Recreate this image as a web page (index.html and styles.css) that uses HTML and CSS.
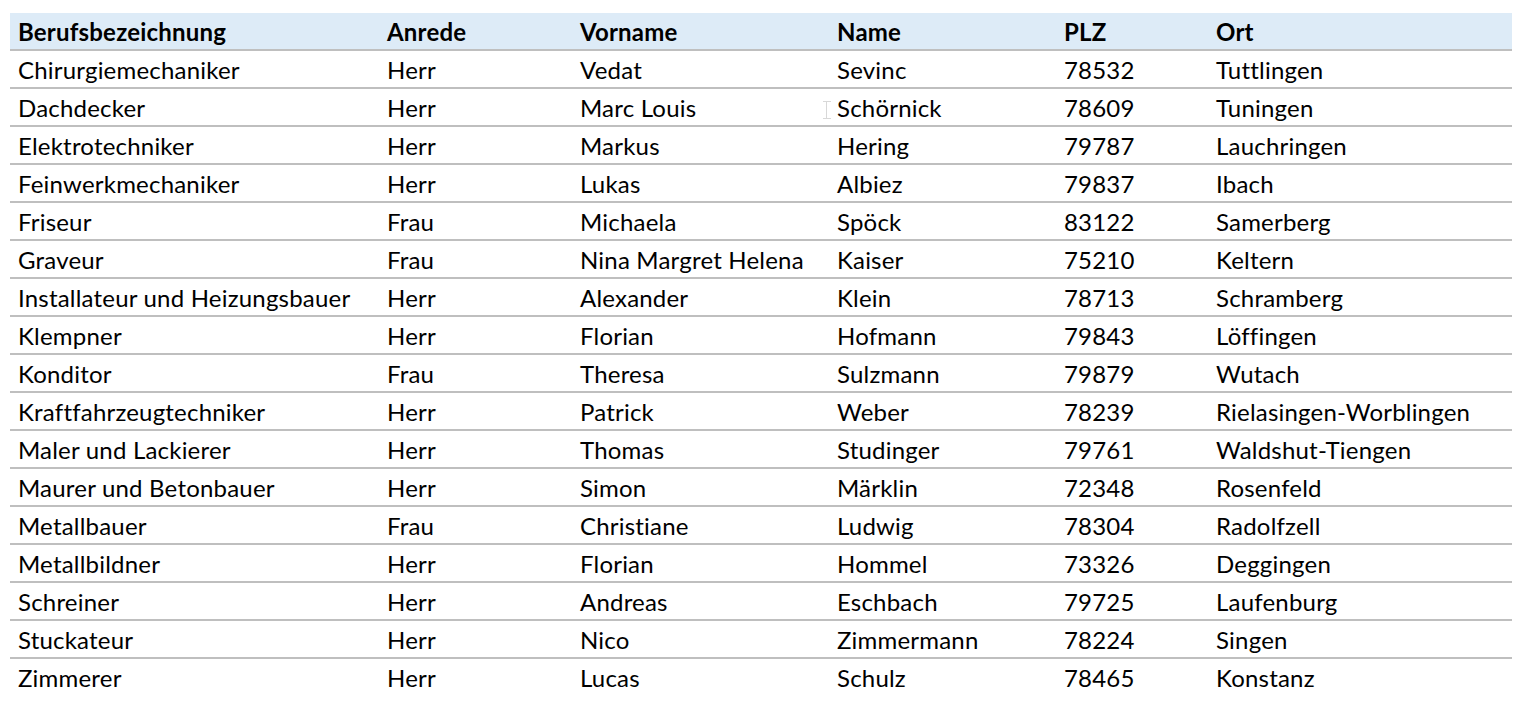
FILE: index.html
```html
<!DOCTYPE html>
<html lang="de">
<head>
<meta charset="utf-8">
<title>Tabelle</title>
<link rel="stylesheet" href="styles.css">
</head>
<body>
<div class="wrap">
<table class="data">
<colgroup>
<col class="c1"><col class="c2"><col class="c3"><col class="c4"><col class="c5"><col class="c6">
</colgroup>
<thead>
<tr><th>Berufsbezeichnung</th><th>Anrede</th><th>Vorname</th><th>Name</th><th>PLZ</th><th>Ort</th></tr>
</thead>
<tbody>
<tr><td>Chirurgiemechaniker</td><td>Herr</td><td>Vedat</td><td>Sevinc</td><td>78532</td><td>Tuttlingen</td></tr>
<tr><td>Dachdecker</td><td>Herr</td><td>Marc Louis</td><td class="cursor-cell"><span class="ibeam"></span>Schörnick</td><td>78609</td><td>Tuningen</td></tr>
<tr><td>Elektrotechniker</td><td>Herr</td><td>Markus</td><td>Hering</td><td>79787</td><td>Lauchringen</td></tr>
<tr><td>Feinwerkmechaniker</td><td>Herr</td><td>Lukas</td><td>Albiez</td><td>79837</td><td>Ibach</td></tr>
<tr><td>Friseur</td><td>Frau</td><td>Michaela</td><td>Spöck</td><td>83122</td><td>Samerberg</td></tr>
<tr><td>Graveur</td><td>Frau</td><td>Nina Margret Helena</td><td>Kaiser</td><td>75210</td><td>Keltern</td></tr>
<tr><td>Installateur und Heizungsbauer</td><td>Herr</td><td>Alexander</td><td>Klein</td><td>78713</td><td>Schramberg</td></tr>
<tr><td>Klempner</td><td>Herr</td><td>Florian</td><td>Hofmann</td><td>79843</td><td>Löffingen</td></tr>
<tr><td>Konditor</td><td>Frau</td><td>Theresa</td><td>Sulzmann</td><td>79879</td><td>Wutach</td></tr>
<tr><td>Kraftfahrzeugtechniker</td><td>Herr</td><td>Patrick</td><td>Weber</td><td>78239</td><td>Rielasingen-Worblingen</td></tr>
<tr><td>Maler und Lackierer</td><td>Herr</td><td>Thomas</td><td>Studinger</td><td>79761</td><td>Waldshut-Tiengen</td></tr>
<tr><td>Maurer und Betonbauer</td><td>Herr</td><td>Simon</td><td>Märklin</td><td>72348</td><td>Rosenfeld</td></tr>
<tr><td>Metallbauer</td><td>Frau</td><td>Christiane</td><td>Ludwig</td><td>78304</td><td>Radolfzell</td></tr>
<tr><td>Metallbildner</td><td>Herr</td><td>Florian</td><td>Hommel</td><td>73326</td><td>Deggingen</td></tr>
<tr><td>Schreiner</td><td>Herr</td><td>Andreas</td><td>Eschbach</td><td>79725</td><td>Laufenburg</td></tr>
<tr><td>Stuckateur</td><td>Herr</td><td>Nico</td><td>Zimmermann</td><td>78224</td><td>Singen</td></tr>
<tr><td>Zimmerer</td><td>Herr</td><td>Lucas</td><td>Schulz</td><td>78465</td><td>Konstanz</td></tr>
</tbody>
</table>
</div>
</body>
</html>
```
FILE: styles.css
```css
html, body {
  margin: 0;
  padding: 0;
  background: #ffffff;
}
.wrap {
  padding: 13px 8px 0 10px;
}
.data {
  width: 1502px;
  border-collapse: collapse;
  table-layout: fixed;
  font-family: Lato, "Open Sans", sans-serif;
  font-size: 24px;
  letter-spacing: 0.2px;
  color: #000000;
}
.c1 { width: 369px; }
.c2 { width: 193px; }
.c3 { width: 257px; }
.c4 { width: 227px; }
.c5 { width: 152px; }
.c6 { width: 304px; }
.data th,
.data td {
  height: 36px;
  padding: 2px 0 0 8px;
  box-sizing: border-box;
  text-align: left;
  vertical-align: middle;
  white-space: nowrap;
  border-bottom: 2px solid #bfbfbf;
  line-height: 34px;
}
.data th {
  background: #ddebf7;
  font-weight: 700;
}
.data tbody tr:last-child td {
  border-bottom: none;
}
.cursor-cell {
  position: relative;
}
.ibeam {
  position: absolute;
  left: -6px;
  top: 12px;
  width: 8px;
  height: 18px;
  border-top: 1px solid #d8d8d8;
  border-bottom: 1px solid #d8d8d8;
  box-sizing: border-box;
}
.ibeam::after {
  content: "";
  position: absolute;
  left: 3px;
  top: 0;
  width: 1px;
  height: 16px;
  background: #d8d8d8;
}
```
